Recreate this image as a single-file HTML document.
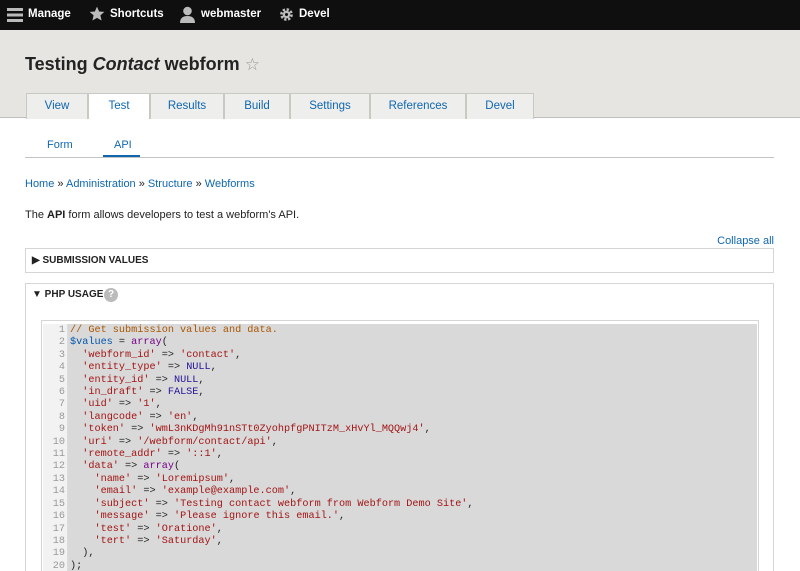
<!DOCTYPE html>
<html style="width:800px;height:571px;overflow:hidden"><head><style>
*{box-sizing:border-box;margin:0;padding:0}
body{width:800px;height:571px;overflow:hidden;background:#fff;font-family:"Liberation Sans",sans-serif;font-size:11px;color:#222;position:relative}
.top{position:absolute;left:0;top:0;width:800px;height:30px;background:#0f0f0f;color:#fff;font-weight:bold;font-size:11.5px}
.top span{position:absolute;top:8px}
.hdr{position:absolute;left:0;top:30px;width:800px;height:88px;background:#e6e5e1;border-bottom:1px solid #bfbfba}
h1{position:absolute;left:25px;top:54px;font-size:18px;font-weight:bold;color:#232323}
.tab{position:absolute;top:93px;height:26px;background:#eeeeec;border:1px solid #c9c9c3;border-bottom:none;color:#0f67b0;font-size:11.5px;text-align:center;line-height:24px}
.tab.act{background:#fff;color:#0f67b0;height:26px}
a,.lnk{color:#0f67b0}
.sub{position:absolute;top:139px;font-size:11px;color:#0f67b0}
.box{position:absolute;border:1px solid #d5d5d5;background:#fff}
.code{position:absolute;left:41px;top:320px;width:718px;height:260px;border:1px solid #d5d5d5;background:#fff}
.inner{position:absolute;left:1px;top:3px;width:714px;height:260px;background:#d9d9d9}
.gut{position:absolute;left:1px;top:3px;width:25px;height:260px;background:#f2f2f2;border-right:1px solid #ddd}
pre{position:absolute;top:4px;font-family:"Liberation Mono",monospace;font-size:10.2px;line-height:12.4px}
.g{left:1px;width:22px;text-align:right;color:#999}
.c{left:28px;color:#222}
.s{color:#a31515}.k{color:#708}.m{color:#aa5500}.v{color:#05a}.n{color:#219}
</style></head><body>
<div class="top">
<svg style="position:absolute;left:7px;top:8px" width="16" height="14"><rect y="0" width="16" height="3" fill="#bbb"/><rect y="5.5" width="16" height="3" fill="#bbb"/><rect y="11" width="16" height="3" fill="#bbb"/></svg>
<span style="left:28px">Manage</span>
<svg style="position:absolute;left:89px;top:6px" width="16" height="16" viewBox="0 0 24 24"><path d="M12 1l3.2 7.2 7.8.7-5.9 5.2 1.8 7.7L12 17.8 5.1 21.8l1.8-7.7L1 8.9l7.8-.7z" fill="#bbb"/></svg>
<span style="left:110px">Shortcuts</span>
<svg style="position:absolute;left:180px;top:6px" width="15" height="17" viewBox="0 0 15 17"><circle cx="7.5" cy="5" r="4.3" fill="#bbb"/><path d="M0 17c0-5 3-7 7.5-7s7.5 2 7.5 7z" fill="#bbb"/></svg>
<span style="left:201px">webmaster</span>
<svg style="position:absolute;left:279px;top:7px" width="15" height="15" viewBox="0 0 20 20"><circle cx="10" cy="10" r="6.5" fill="none" stroke="#bbb" stroke-width="4" stroke-dasharray="3 2.1"/><circle cx="10" cy="10" r="5" fill="#bbb"/><circle cx="10" cy="10" r="2" fill="#0f0f0f"/></svg>
<span style="left:299px">Devel</span>
</div>
<div class="hdr"></div>
<h1>Testing <i>Contact</i> webform <span style="font-weight:normal;color:#999;font-size:17px">☆</span></h1>
<div class="tab" style="left:26px;width:62px">View</div>
<div class="tab act" style="left:88px;width:62px">Test</div>
<div class="tab" style="left:150px;width:74px">Results</div>
<div class="tab" style="left:224px;width:66px">Build</div>
<div class="tab" style="left:290px;width:80px">Settings</div>
<div class="tab" style="left:370px;width:96px">References</div>
<div class="tab" style="left:466px;width:68px">Devel</div>
<div class="sub" style="left:47px">Form</div>
<div class="sub" style="left:114px">API</div>
<div style="position:absolute;left:103px;top:155px;width:37px;height:2px;background:#0f67b0"></div>
<div style="position:absolute;left:25px;top:157px;width:749px;height:1px;background:#c4c4c4"></div>
<div style="position:absolute;left:25px;top:178px" class="lnk">Home <span style="color:#222">»</span> Administration <span style="color:#222">»</span> Structure <span style="color:#222">»</span> Webforms</div>
<div style="position:absolute;left:25px;top:209px">The <b>API</b> form allows developers to test a webform's API.</div>
<div style="position:absolute;right:26px;top:235px" class="lnk">Collapse all</div>
<div class="box" style="left:25px;top:248px;width:749px;height:25px"><div style="position:absolute;left:6px;top:6px;font-weight:bold;font-size:10px">▶ SUBMISSION VALUES</div></div>
<div class="box" style="left:25px;top:283px;width:749px;height:300px"><div style="position:absolute;left:6px;top:5px;font-weight:bold;font-size:10px;white-space:nowrap">▼ PHP USAGE</div><div style="position:absolute;left:78px;top:4px;width:14px;height:14px;border-radius:7px;background:#bbb;color:#fff;text-align:center;line-height:14px;font-size:10px;font-weight:bold">?</div></div>
<div class="code"><div class="inner"></div><div class="gut"></div>
<pre class="g">1
2
3
4
5
6
7
8
9
10
11
12
13
14
15
16
17
18
19
20</pre>
<pre class="c"><span class="m">// Get submission values and data.</span>
<span class="v">$values</span> = <span class="k">array</span>(
  <span class="s">'webform_id'</span> =&gt; <span class="s">'contact'</span>,
  <span class="s">'entity_type'</span> =&gt; <span class="n">NULL</span>,
  <span class="s">'entity_id'</span> =&gt; <span class="n">NULL</span>,
  <span class="s">'in_draft'</span> =&gt; <span class="n">FALSE</span>,
  <span class="s">'uid'</span> =&gt; <span class="s">'1'</span>,
  <span class="s">'langcode'</span> =&gt; <span class="s">'en'</span>,
  <span class="s">'token'</span> =&gt; <span class="s">'wmL3nKDgMh91nSTt0ZyohpfgPNITzM_xHvYl_MQQwj4'</span>,
  <span class="s">'uri'</span> =&gt; <span class="s">'/webform/contact/api'</span>,
  <span class="s">'remote_addr'</span> =&gt; <span class="s">'::1'</span>,
  <span class="s">'data'</span> =&gt; <span class="k">array</span>(
    <span class="s">'name'</span> =&gt; <span class="s">'Loremipsum'</span>,
    <span class="s">'email'</span> =&gt; <span class="s">'example@example.com'</span>,
    <span class="s">'subject'</span> =&gt; <span class="s">'Testing contact webform from Webform Demo Site'</span>,
    <span class="s">'message'</span> =&gt; <span class="s">'Please ignore this email.'</span>,
    <span class="s">'test'</span> =&gt; <span class="s">'Oratione'</span>,
    <span class="s">'tert'</span> =&gt; <span class="s">'Saturday'</span>,
  ),
);</pre>
</div>
</body></html>
